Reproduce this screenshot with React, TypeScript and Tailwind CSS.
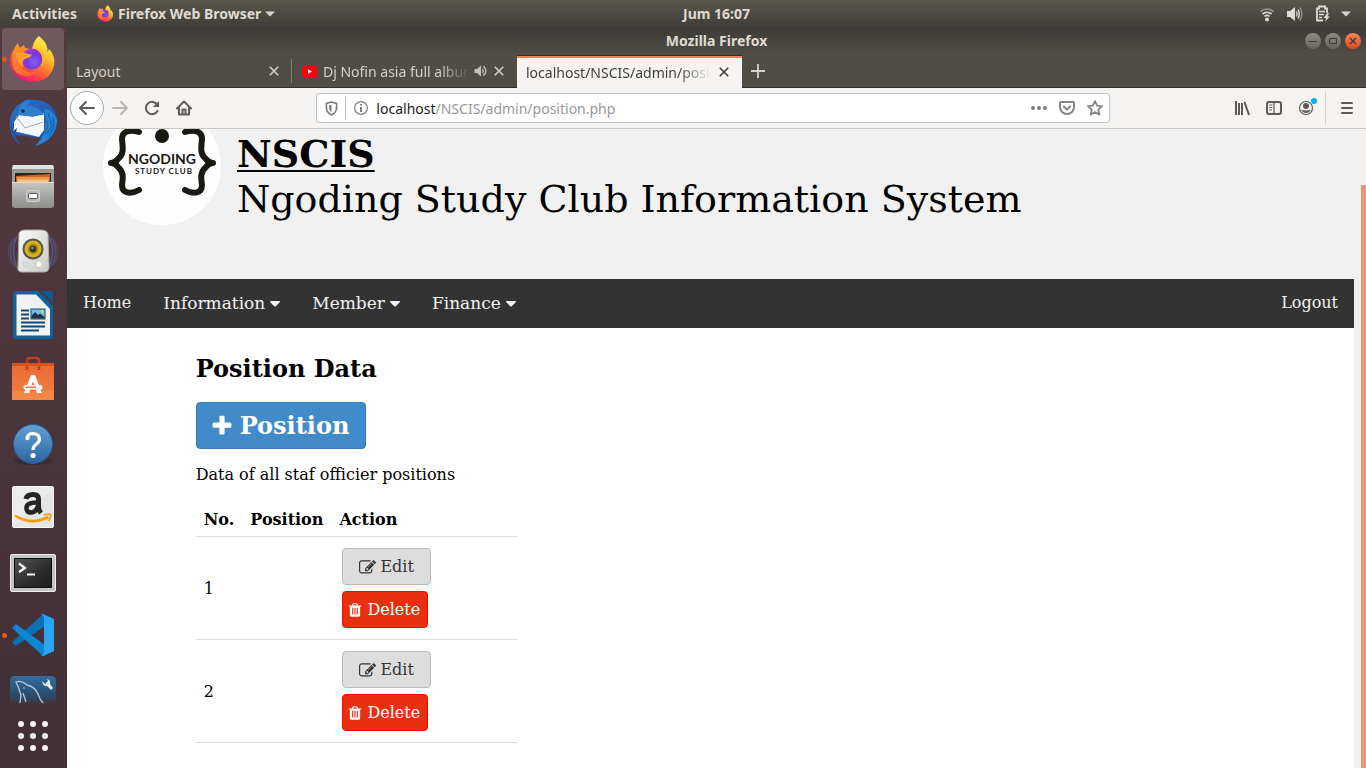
import React from 'react';

const serif = "font-['DejaVu_Serif',serif]";

/* ---------- Dock icons ---------- */

function FirefoxLogo({ className }: { className: string }) {
  return (
    <svg viewBox="9 8 48 48" className={className} aria-hidden="true">
      <defs>
        <linearGradient id="ffBody" x1="0.85" y1="0.1" x2="0.3" y2="1">
          <stop offset="0" stopColor="#fff24a" />
          <stop offset="0.3" stopColor="#ffc22a" />
          <stop offset="0.55" stopColor="#ff7a2c" />
          <stop offset="0.8" stopColor="#ff3a50" />
          <stop offset="1" stopColor="#e3127c" />
        </linearGradient>
        <radialGradient id="ffGlobe" cx="0.6" cy="0.65" r="0.65">
          <stop offset="0" stopColor="#7d63f5" />
          <stop offset="0.6" stopColor="#7a35dd" />
          <stop offset="1" stopColor="#a537dc" />
        </radialGradient>
        <linearGradient id="ffFox" x1="0" y1="0" x2="0.4" y2="1">
          <stop offset="0" stopColor="#ff9a1f" />
          <stop offset="1" stopColor="#ff6a32" />
        </linearGradient>
      </defs>
      <path d="M39 9C42 12 46 15 47 20C48 22 47 24 47.500 25L49 22C55 28 55.500 36 53 42C50 50 42 55 32 55C20 55 10 46 10 34C10 28 13 23 18 16C18 18 18.500 20 20 21L24 18C24 20 24.500 21 26 21.500L32 22C33 17 35 12 39 9Z" fill="url(#ffBody)" />
      <path d="M18 16C18 18 18.500 20 20 21L24 18C24 20 25 22 27 22C23 27 20 34 22 40C25 46 32 47 37 44C33 51 21 51 15 44C11 38 11 26 18 16Z" fill="url(#ffFox)" />
      <circle cx="32" cy="32" r="10.500" fill="url(#ffGlobe)" />
      <path d="M16 27C20 25 25 25 28 27L32 27.500C31 30 28 31 26 31.500C22 33 22 37 24 40C19 38 17 32 16 27Z" fill="#ffa02b" />
      <path d="M36 23C42 25 44 32 41 39C46 36 46 27 42 24Z" fill="#ffb52c" />
    </svg>
  );
}

function Thunderbird() {
  return (
    <svg viewBox="0 0 64 64" className="size-16" aria-hidden="true">
      <defs>
        <linearGradient id="tbBlue" x1="0" y1="0" x2="1" y2="1">
          <stop offset="0" stopColor="#2d74d2" />
          <stop offset="1" stopColor="#16479b" />
        </linearGradient>
      </defs>
      <path d="M20 12C24 8 28 8 30 9C44 7 54 16 56 27C58 40 49 51 36 54C39 51 40 49 41 47L14 44C14 47 18 51 20 54C13 50 8 41 9 32C9 24 13 16 20 12Z" fill="url(#tbBlue)" />
      <path d="M43 18C50 18 53 22 56 29C56 42 47 52 34 55C39 50 41 46 43 42C45 34 45 26 43 18Z" fill="#2583d2" />
      <path d="M47 22L51 35L46 43M52 26L53 36L48 46M43 24L47 34L44 42" stroke="#1a62b4" strokeWidth="1.300" fill="none" />
      <path d="M13 31L18 24L28 25C33 27 37 24 43 22L43 39L38 46L12 40L13 37Z" fill="#f4f6f8" />
      <path d="M15 25L24 37L42 31" stroke="#a4aab4" strokeWidth="1" fill="none" />
      <path d="M12 28L10 35L13 34L12 40L16 37L14 45C9 40 8 34 12 28Z" fill="#1c54a6" />
      <path d="M17 24C17 14 24 9 29 10L25 15C31 14 39 17 43 24C36 24 30 26 26 25Z" fill="#2f7fce" />
      <circle cx="22" cy="20" r="1.800" fill="#172f54" />
    </svg>
  );
}

function Files() {
  return (
    <svg viewBox="0 0 64 64" className="size-16" aria-hidden="true">
      <defs>
        <linearGradient id="fileBox" x1="0" y1="0" x2="0" y2="1">
          <stop offset="0" stopColor="#c5c5c3" />
          <stop offset="1" stopColor="#8d8d8b" />
        </linearGradient>
      </defs>
      <path d="M12 10H52L53 14V50H11V14Z" fill="#989896" />
      <path d="M12 10H52L53 14H11Z" fill="#e1e1df" />
      <rect x="14" y="18" width="36" height="10" fill="#262421" />
      <path d="M15 21L31 20L49 19V28H15Z" fill="#d66014" />
      <path d="M16 24H48V28H16Z" fill="#f0a252" />
      <path d="M16 23H48M17 26H47" stroke="#fff0cb" strokeWidth="0.800" />
      <path d="M11 27H53V50Q53 53 50 53H14Q11 53 11 50Z" fill="url(#fileBox)" />
      <path d="M11 27.500H53" stroke="#dededc" />
      <rect x="25.500" y="35.500" width="13" height="11" rx="1.500" fill="#b6b6b4" stroke="#d0d0cf" />
      <rect x="27.500" y="38.500" width="9" height="5" rx="1" fill="#f7f7f7" stroke="#555" />
    </svg>
  );
}

function Rhythmbox() {
  return (
    <svg viewBox="0 0 64 64" className="size-16" aria-hidden="true">
      <defs>
        <linearGradient id="rhBox" x1="0" y1="0" x2="1" y2="1">
          <stop offset="0" stopColor="#fbfbfa" />
          <stop offset="1" stopColor="#c7c7c4" />
        </linearGradient>
      </defs>
      <g fill="none" stroke="#5d6fae" strokeWidth="1.500">
        <path d="M13 19Q6 32 13 47M51 19Q58 32 51 47" opacity="0.450" />
        <path d="M16 17Q9 32 16 49M48 17Q55 32 48 49" opacity="0.600" />
        <path d="M10 22Q5 32 10 44M54 22Q59 32 54 44" opacity="0.250" />
      </g>
      <path d="M18 14Q19 11 25 11H39Q46 11 47 15L48 48Q48 53 43 53H21Q16 53 17 48Z" fill="url(#rhBox)" stroke="#acaca8" />
      <circle cx="32" cy="30" r="10.500" fill="#55534f" />
      <circle cx="32" cy="30" r="8.500" fill="#d5b01d" />
      <circle cx="32" cy="30" r="5" fill="#a3820a" />
      <circle cx="32" cy="30" r="3.200" fill="#343432" />
      <circle cx="31.500" cy="29" r="1.300" fill="#8b8b85" />
      <circle cx="38" cy="45" r="3.500" fill="#fff" stroke="#bfbfbc" />
      <rect x="22" y="43" width="4.500" height="4.500" rx="1" fill="none" stroke="#cdcdcb" />
    </svg>
  );
}

function Writer() {
  return (
    <svg viewBox="0 0 64 64" className="size-16" aria-hidden="true">
      <path d="M15 8H37L52 23V53Q52 56 49 56H15Q12 56 12 53V11Q12 8 15 8Z" fill="#0e639c" />
      <path d="M40 8H50Q52 8 52 10V20Z" fill="#0c5a91" />
      <path d="M15.500 11.500H35L49 26V52.500H15.500Z" fill="#f0f2f3" />
      <path d="M20 27.500H28M20 31.500H28M20 35.500H28M20 39.500H44M20 43.500H44M20 47.500H38" stroke="#0b4a78" strokeWidth="2" />
      <rect x="30" y="26" width="14" height="10" fill="#76bce6" stroke="#0b4a78" />
      <path d="M30.500 35.500V33L34 29L37 32L39 30.500L43.500 34V35.500Z" fill="#24323d" />
      <circle cx="41.500" cy="28.500" r="1.500" fill="#f2d64a" />
    </svg>
  );
}

function Software() {
  return (
    <svg viewBox="0 0 64 64" className="size-16" aria-hidden="true">
      <defs>
        <linearGradient id="swBag" x1="0" y1="0" x2="0" y2="1">
          <stop offset="0" stopColor="#eb6a35" />
          <stop offset="1" stopColor="#f2803f" />
        </linearGradient>
      </defs>
      <path d="M11 16H53V52Q53 53 51 53H13Q11 53 11 52Z" fill="url(#swBag)" />
      <path d="M11 44H53V53H11Z" fill="#f79254" opacity="0.500" />
      <path d="M26 23V14Q26 11 29 11H35Q38 11 38 14V23" fill="none" stroke="#bf3f16" strokeWidth="2.500" />
      <path d="M11 16H53V19H11Z" fill="#d8521f" />
      <path d="M30 28H34L41 46H36L32 34L28 46H23Z" fill="#fff" />
      <rect x="22.500" y="38" width="19" height="4.500" rx="2" fill="#fff" />
      <path d="M25 40.300H35" stroke="#ee7138" strokeWidth="1.500" />
    </svg>
  );
}

function Help() {
  return (
    <svg viewBox="0 0 64 64" className="size-16" aria-hidden="true">
      <defs>
        <linearGradient id="helpBlue" x1="0" y1="0" x2="0" y2="1">
          <stop offset="0" stopColor="#65a1d4" />
          <stop offset="1" stopColor="#2c659f" />
        </linearGradient>
      </defs>
      <ellipse cx="32" cy="50" rx="19" ry="4" fill="#2b1f24" opacity="0.400" />
      <circle cx="32" cy="33" r="19.500" fill="url(#helpBlue)" stroke="#255b92" />
      <path d="M26.500 26.500Q27 22.500 32 22.500Q38.500 23 38.500 28Q38.500 31 35 33.500Q32 35.500 32 39" fill="none" stroke="#fff" strokeWidth="3.200" />
      <circle cx="26.500" cy="27" r="2.200" fill="#fff" />
      <circle cx="32" cy="44.500" r="2.600" fill="#fff" />
    </svg>
  );
}

function Amazon() {
  return (
    <svg viewBox="0 0 64 64" className="size-16" aria-hidden="true">
      <rect x="11.500" y="11.500" width="41" height="41" rx="1.500" fill="#ececec" stroke="#fafafa" />
      <path d="M53 12V52H12Z" fill="#e1e1e1" opacity="0.600" />
      <path d="M25 24Q26 19.500 32 19.500Q37.500 19.500 37.500 24V32Q37.500 35 40 38" fill="none" stroke="#242424" strokeWidth="5" />
      <path d="M37 27.500Q25 27 25.500 33.500Q26 38 30.500 37.500Q36 36.500 37 31" fill="none" stroke="#242424" strokeWidth="4.600" />
      <path d="M14 40.500Q30 51 47 42" fill="none" stroke="#ff9900" strokeWidth="2.600" />
      <path d="M43 40Q48 38.500 50 39.500Q50 42 47.500 46" fill="none" stroke="#ff9900" strokeWidth="1.600" />
    </svg>
  );
}

function Terminal() {
  return (
    <svg viewBox="0 0 64 64" className="size-16" aria-hidden="true">
      <defs>
        <linearGradient id="termBg" x1="0" y1="0" x2="1" y2="1">
          <stop offset="0" stopColor="#535353" />
          <stop offset="0.600" stopColor="#2c2c2c" />
          <stop offset="1" stopColor="#1d1d1d" />
        </linearGradient>
      </defs>
      <rect x="9.500" y="15.500" width="45" height="37" rx="1.500" fill="#c3c3c1" stroke="#efefed" />
      <rect x="13.500" y="19.500" width="37" height="29" fill="url(#termBg)" stroke="#111" />
      <path d="M18 24.500L24 29L18 33" fill="none" stroke="#fff" strokeWidth="2.200" />
      <path d="M26 35.500H34" stroke="#fff" strokeWidth="2" />
    </svg>
  );
}

function VsCode() {
  return (
    <svg viewBox="0 0 64 64" className="size-16" aria-hidden="true">
      <path d="M11 39L15 43L44 23V12Q42 11 40 13L11 39Z" fill="#0870b5" />
      <path d="M11 25L15 21L44 42V53Q42 53 40 51Z" fill="#0a86d3" />
      <path d="M40 12L42 11L53 16V48L42 53L40 52Q43 51 43 48V15Q43 12 40 12Z" fill="#2aa5f3" />
    </svg>
  );
}

function MySql() {
  return (
    <svg viewBox="0 0 64 64" className="size-16" aria-hidden="true">
      <defs>
        <linearGradient id="sqlBg" x1="0" y1="0" x2="0" y2="1">
          <stop offset="0" stopColor="#336e9f" />
          <stop offset="0.700" stopColor="#284b6c" />
          <stop offset="1" stopColor="#46323a" />
        </linearGradient>
      </defs>
      <path d="M9 14Q9 9 14 9H50Q55 9 55 14V37H9Z" fill="url(#sqlBg)" />
      <path d="M19 36L20 28Q18 21 15 15Q20 13 26 18Q34 20 37 27Q39 33 42 36M22 26L25 35" fill="none" stroke="#b9c6d3" strokeWidth="1.300" />
      <circle cx="23" cy="21" r="0.800" fill="#b9c6d3" />
      <path d="M41 14L44 17L47 14L46 12Q50 13 49 17L52 21L50 23L46 19Q42 20 41 14Z" fill="#e3e8ec" />
    </svg>
  );
}

const dockApps = [
  { name: 'Firefox', icon: <FirefoxLogo className="size-12" />, running: true, active: true },
  { name: 'Thunderbird', icon: <Thunderbird /> },
  { name: 'Files', icon: <Files /> },
  { name: 'Rhythmbox', icon: <Rhythmbox /> },
  { name: 'LibreOffice Writer', icon: <Writer /> },
  { name: 'Ubuntu Software', icon: <Software /> },
  { name: 'Help', icon: <Help /> },
  { name: 'Amazon', icon: <Amazon /> },
  { name: 'Terminal', icon: <Terminal /> },
  { name: 'Visual Studio Code', icon: <VsCode />, running: true },
  { name: 'MySQL Workbench', icon: <MySql /> },
];

function Dock() {
  return (
    <aside className="flex w-[67px] shrink-0 flex-col bg-linear-to-b from-[#533a3f] to-[#413036]">
      <ul className="min-h-0 flex-1 overflow-hidden">
        {dockApps.map((app) => (
          <li key={app.name} className="h-16">
            <button aria-label={app.name} className="relative flex h-16 w-full items-center justify-center pr-px">
              {app.active && <span className="absolute inset-x-0 top-px mr-[3px] ml-0.5 h-[62px] rounded-[4px] bg-[#6f595e]" />}
              {app.running && <span className="absolute top-[30px] left-0.5 size-[5px] rounded-full bg-[#e95420]" />}
              <span className="relative">{app.icon}</span>
            </button>
          </li>
        ))}
      </ul>
      <button aria-label="Show Applications" className="flex h-16 shrink-0 items-center justify-center pr-px">
        <svg viewBox="0 0 64 64" className="size-16" fill="#f2f1f0" aria-hidden="true">
          {[20, 32, 44].map((y) => [20, 32, 44].map((x) => <circle key={`${x}-${y}`} cx={x} cy={y} r="3" />))}
        </svg>
      </button>
    </aside>
  );
}

/* ---------- Desktop top bar ---------- */

function Triangle() {
  return (
    <svg viewBox="0 0 10 6" className="h-[6px] w-[10px]" fill="#d6d3cd" aria-hidden="true">
      <path d="M0 0.500H10L5 5.500Z" />
    </svg>
  );
}

function TopBar() {
  return (
    <header className="grid h-[27px] shrink-0 grid-cols-[1fr_auto_1fr] items-center bg-linear-to-b from-[#5a574d] to-[#3f3e38] text-[14px] font-bold text-[#dfdbd2]">
      <div className="flex items-center gap-5 pl-3">
        <button>Activities</button>
        <button className="flex items-center gap-1">
          <FirefoxLogo className="size-[17px]" />
          <span>Firefox Web Browser</span>
          <Triangle />
        </button>
      </div>
      <button className="ml-[67px]">Jum 16:07</button>
      <button aria-label="System menu" className="flex items-center gap-[10px] justify-self-end pr-[15px]">
        <svg viewBox="0 0 16 16" className="mr-0.5 size-4" fill="none" stroke="#dfdbd2" aria-hidden="true">
          <path d="M1.500 5.500Q8 0.500 14.500 5.500" strokeWidth="1.700" opacity="0.500" />
          <path d="M3.500 8Q8 4.500 12.500 8" strokeWidth="1.700" />
          <path d="M5.500 10.300Q8 8.500 10.500 10.300" strokeWidth="1.600" />
          <circle cx="8" cy="13.500" r="2" fill="#dfdbd2" stroke="none" />
        </svg>
        <svg viewBox="0 0 16 16" className="size-4" fill="none" stroke="#dfdbd2" aria-hidden="true">
          <path d="M0 5H3L8 1V15L3 11H0Z" fill="#dfdbd2" stroke="none" />
          <path d="M9.500 5.500Q11 8 9.500 10.500M11 3.500Q13.500 8 11 12.500" strokeWidth="1.400" />
          <path d="M13 1.500Q16.500 8 13 14.500" strokeWidth="1.500" opacity="0.500" />
        </svg>
        <svg viewBox="0 0 16 17" className="ml-0.5 h-[17px] w-4" fill="none" stroke="#dfdbd2" strokeWidth="1.800" aria-hidden="true">
          <path d="M8 15.500H2V3.500H4V1.500H10V3.500H12V8" />
          <path d="M4 6.500H10M4 9.500H9M4 12.500H7" strokeWidth="1.400" />
          <path d="M12.500 8L8.500 13H11L10 16.500L15 11.500H12.500L14 8Z" fill="#dfdbd2" stroke="none" />
        </svg>
        <Triangle />
      </button>
    </header>
  );
}

/* ---------- Browser window chrome ---------- */

function CloseIcon() {
  return (
    <svg viewBox="0 0 10 10" className="size-[10px]" stroke="currentColor" strokeWidth="1.600" aria-hidden="true">
      <path d="M0.800 0.800L9.200 9.200M9.200 0.800L0.800 9.200" />
    </svg>
  );
}

function TitleBar() {
  return (
    <div className="grid h-7 shrink-0 grid-cols-[1fr_auto_1fr] items-center bg-linear-to-b from-[#3c3b37] to-[#504d46]">
      <h1 className="col-start-2 pb-0.5 text-[14px] font-bold text-[#dfdbd2]">Mozilla Firefox</h1>
      <div className="flex gap-1 justify-self-end pr-[5px] text-[#3c3b37]">
        <button aria-label="Minimize" className="flex size-4 items-center justify-center rounded-full bg-linear-to-b from-[#8d8b84] to-[#65635d]">
          <svg viewBox="0 0 8 8" className="size-2" stroke="currentColor" aria-hidden="true"><path d="M0 4.500H8" /></svg>
        </button>
        <button aria-label="Maximize" className="flex size-4 items-center justify-center rounded-full bg-linear-to-b from-[#8d8b84] to-[#65635d]">
          <svg viewBox="0 0 8 8" className="size-2" stroke="currentColor" fill="none" aria-hidden="true"><path d="M0.500 1.500H7.500V6.500H0.500Z" /></svg>
        </button>
        <button aria-label="Close" className="flex size-4 items-center justify-center rounded-full bg-linear-to-b from-[#f68457] to-[#dd4814]">
          <svg viewBox="0 0 8 8" className="size-2" stroke="currentColor" strokeWidth="1.400" aria-hidden="true"><path d="M1 1L7 7M7 1L1 7" /></svg>
        </button>
      </div>
    </div>
  );
}

const fade = '[mask-image:linear-gradient(to_right,black_calc(100%-32px),transparent)]';

function TabBar() {
  return (
    <div role="tablist" className="flex h-[33px] shrink-0 border-b border-[#33322e] bg-[#504d46] text-[14px] text-[#d5d1c8]">
      <div role="tab" className="flex w-[225px] items-center pl-[9px]">
        <span className="flex-1">Layout</span>
        <button aria-label="Close tab"><CloseIcon /></button>
        <span className="ml-3 h-6 w-px bg-[#7c7a73]" />
      </div>
      <div role="tab" className="flex w-[225px] items-center pr-[13px] pl-[10px]">
        <svg viewBox="0 0 15 11" className="mr-1.5 h-[11px] w-[15px] shrink-0" aria-hidden="true">
          <rect width="15" height="11" rx="2.500" fill="#f00" />
          <path d="M6 3.200L10 5.500L6 7.800Z" fill="#fff" />
        </svg>
        <span className={`min-w-0 flex-1 overflow-hidden whitespace-nowrap ${fade}`}>Dj Nofin asia full album</span>
        <button aria-label="Mute tab" className="mr-1.5 ml-1">
          <svg viewBox="0 0 14 12" className="h-3 w-[14px]" fill="none" stroke="#c4c1b9" strokeWidth="1.300" aria-hidden="true">
            <path d="M0.500 4H3L7 0.500V11.500L3 8H0.500Z" fill="#c4c1b9" stroke="none" />
            <path d="M8.500 4Q10 6 8.500 8M9 1.500Q11.800 2.500 11.800 6T9 10.500" />
          </svg>
        </button>
        <button aria-label="Close tab"><CloseIcon /></button>
      </div>
      <div role="tab" aria-selected="true" className="mt-px -mb-px flex w-[225px] items-center border-t-2 border-[#f0825a] bg-[#f5f4f2] pr-[13px] pb-0.5 pl-[9px] text-[#3f3e3b] shadow-[0_-1px_0_#33322e]">
        <span className={`mr-2 min-w-0 flex-1 overflow-hidden whitespace-nowrap ${fade}`}>localhost/NSCIS/admin/position.php</span>
        <button aria-label="Close tab"><CloseIcon /></button>
      </div>
      <button aria-label="New tab" className="px-[9px]">
        <svg viewBox="0 0 14 14" className="size-[14px]" stroke="currentColor" strokeWidth="1.800" aria-hidden="true"><path d="M7 0V14M0 7H14" /></svg>
      </button>
    </div>
  );
}

function ToolButton({ label, className = 'text-[#5c5b58]', children }: { label: string; className?: string; children: React.ReactNode }) {
  return (
    <button aria-label={label} className={`flex h-8 w-8 shrink-0 items-center justify-center ${className}`}>
      <svg viewBox="0 0 16 16" className="size-4 overflow-visible" fill="none" stroke="currentColor" strokeWidth="2" strokeLinecap="round" strokeLinejoin="round" aria-hidden="true">
        {children}
      </svg>
    </button>
  );
}

function Toolbar() {
  return (
    <div className="flex h-[41px] shrink-0 items-center border-b border-[#c9c7c4] bg-[#f5f4f2] pr-[3px] pl-[3px]">
      <button aria-label="Back" className="flex size-[34px] shrink-0 items-center justify-center rounded-full border border-[#a9a8a5] bg-white text-[#5c5b58]">
        <svg viewBox="0 0 16 16" className="size-4" fill="none" stroke="currentColor" strokeWidth="2" strokeLinecap="round" strokeLinejoin="round" aria-hidden="true">
          <path d="M15 8H1.500M7 2L1 8L7 14" />
        </svg>
      </button>
      <ToolButton label="Forward" className="text-[#b8b7b4]"><path d="M1 8H14.500M9 2L15 8L9 14" /></ToolButton>
      <ToolButton label="Reload">
        <path d="M13.500 11A6.200 6.200 0 1 1 13.500 5" />
        <path d="M15 1V7H9Z" fill="currentColor" stroke="none" />
      </ToolButton>
      <ToolButton label="Home">
        <path d="M1 8.500L8 1.500L15 8.500M3 8V14.500H13V8" />
        <path d="M6.500 14V9.500H9.500V14" />
      </ToolButton>
      <span className="w-[9%] shrink-0" />
      <div className="flex h-[30px] min-w-0 flex-1 items-center rounded-[3px] border border-[#c3c1be] bg-white text-[14px]">
        <button aria-label="Tracking protection" className="flex h-full w-[28px] items-center justify-center">
          <svg viewBox="0 0 14 16" className="h-[15px] w-[13px]" fill="none" stroke="#7d7c79" aria-hidden="true">
            <path d="M1.500 2.500Q4.500 2 7 1Q9.500 2 12.500 2.500V7Q12.500 12.500 7 15Q1.500 12.500 1.500 7Z" strokeWidth="1.800" />
            <path d="M7 4V12Q4.300 10 4.300 7V4.500Z" fill="#7d7c79" stroke="none" />
          </svg>
        </button>
        <span className="h-[22px] w-px bg-[#c3c1be]" />
        <button aria-label="Site information" className="flex h-full w-[30px] items-center justify-center">
          <svg viewBox="0 0 14 14" className="size-[14px]" fill="none" stroke="#7d7c79" aria-hidden="true">
            <circle cx="7" cy="7" r="6.400" strokeWidth="1.200" />
            <path d="M7 3V4.500M7 6V11" strokeWidth="2" />
          </svg>
        </button>
        <label htmlFor="url" className="text-[#1c1c1c]">localhost</label>
        <input id="url" defaultValue="/NSCIS/admin/position.php" className="h-7 min-w-0 flex-1 bg-transparent text-[#98979b] outline-none" />
        <button aria-label="Page actions" className="flex w-7 justify-center">
          <svg viewBox="0 0 16 4" className="h-1 w-4" fill="#7d7c79" aria-hidden="true"><circle cx="2" cy="2" r="2" /><circle cx="8" cy="2" r="2" /><circle cx="14" cy="2" r="2" /></svg>
        </button>
        <button aria-label="Save to Pocket" className="flex w-7 justify-center">
          <svg viewBox="0 0 16 14" className="h-[14px] w-4" fill="none" stroke="#858481" strokeWidth="2" strokeLinecap="round" strokeLinejoin="round" aria-hidden="true">
            <path d="M2 1H14Q15 1 15 2V6A7 7 0 0 1 1 6V2Q1 1 2 1Z" /><path d="M4.800 5.500L8 8.500L11.200 5.500" />
          </svg>
        </button>
        <button aria-label="Bookmark this page" className="flex w-7 justify-center">
          <svg viewBox="0 0 16 16" className="size-4" fill="none" stroke="#858481" strokeWidth="1.800" strokeLinejoin="round" aria-hidden="true">
            <path d="M8 1L10.100 5.700L15 6.200L11.300 9.600L12.400 14.700L8 12.100L3.600 14.700L4.700 9.600L1 6.200L5.900 5.700Z" />
          </svg>
        </button>
      </div>
      <span className="w-[9%] shrink-0" />
      <ToolButton label="Library"><path d="M2 1V15M5 3V15M8 3V15M10.500 2L15 15" strokeLinecap="butt" /></ToolButton>
      <ToolButton label="Sidebars">
        <rect x="1" y="2" width="14" height="12" rx="2" />
        <path d="M8 2V14" strokeWidth="1.200" /><path d="M3.500 5H6M3.500 7.500H6M3.500 10H5.500" strokeWidth="1" />
      </ToolButton>
      <ToolButton label="Account">
        <circle cx="8" cy="8" r="6.500" strokeWidth="1.200" />
        <circle cx="8" cy="6" r="3" fill="currentColor" stroke="none" />
        <path d="M3.500 9.500Q8 11.500 12.500 9.500Q11.500 13 8 13T3.500 9.500Z" fill="currentColor" stroke="none" />
        <circle cx="16" cy="1" r="3" fill="#00b3f4" stroke="none" />
      </ToolButton>
      <span className="mr-[5px] ml-[3px] h-[34px] w-px bg-[#d6d5d2]" />
      <ToolButton label="Menu"><path d="M3 3H13M3 8H13M3 13H13" /></ToolButton>
    </div>
  );
}

/* ---------- Web page ---------- */

function Brace({ flip = false }: { flip?: boolean }) {
  return (
    <path
      transform={flip ? 'translate(118 0) scale(-1 1)' : undefined}
      d="M36 25C27 22 19 24 19 32C20 42 21 47 15 52C13 55 11 56 8 56C11 56 13 57 15 60C21 65 20 71 19 78C19 86 27 88 36 83"
      fill="none"
      stroke="#1b1913"
      strokeWidth="6"
      strokeLinecap="round"
      strokeLinejoin="round"
    />
  );
}

function ClubLogo() {
  return (
    <svg viewBox="0 0 118 118" className="size-[118px]" role="img" aria-label="Ngoding Study Club">
      <circle cx="59" cy="59" r="59" fill="#fefefe" />
      <circle cx="59" cy="29" r="7" fill="#1b1913" />
      <Brace />
      <Brace flip />
      <text x="59" y="57" textAnchor="middle" className="font-['Lato',sans-serif] text-[14px] font-bold" fill="#1b1913">NGODING</text>
      <text x="61" y="67" textAnchor="middle" className="font-['Lato',sans-serif] text-[8px] font-bold tracking-[1px]" fill="#1b1913">STUDY CLUB</text>
    </svg>
  );
}

function Glyph({ d, className }: { d: string; className: string }) {
  return (
    <svg viewBox="0 0 1792 1792" className={className} fill="currentColor" aria-hidden="true"><path d={d} /></svg>
  );
}

const plusPath = 'M1600 736v192q0 40-28 68t-68 28h-416v416q0 40-28 68t-68 28h-192q-40 0-68-28t-28-68v-416h-416q-40 0-68-28t-28-68v-192q0-40 28-68t68-28h416v-416q0-40 28-68t68-28h192q40 0 68 28t28 68v416h416q40 0 68 28t28 68z';
const editPath = 'M888 1184l116-116-152-152-116 116v56h96v96h56zm440-720q-16-16-33 1l-350 350q-17 17-1 33t33-1l350-350q17-17 1-33zm80 594v190q0 119-84.500 203.500t-203.500 84.500h-832q-119 0-203.500-84.500t-84.500-203.500v-832q0-119 84.500-203.500t203.500-84.500h832q63 0 117 25 15 7 18 23 3 17-9 29l-49 49q-14 14-32 8-23-6-45-6h-832q-66 0-113 47t-47 113v832q0 66 47 113t113 47h832q66 0 113-47t47-113v-126q0-13 9-22l64-64q15-15 35-7t20 29zm-96-738l288 288-672 672h-288v-288zm444 132l-92 92-288-288 92-92q28-28 68-28t68 28l152 152q28 28 28 68t-28 68z';
const trashPath = 'M704 1376v-704q0-14-9-23t-23-9h-64q-14 0-23 9t-9 23v704q0 14 9 23t23 9h64q14 0 23-9t9-23zm256 0v-704q0-14-9-23t-23-9h-64q-14 0-23 9t-9 23v704q0 14 9 23t23 9h64q14 0 23-9t9-23zm256 0v-704q0-14-9-23t-23-9h-64q-14 0-23 9t-9 23v704q0 14 9 23t23 9h64q14 0 23-9t9-23zm-544-992h448l-48-117q-7-9-17-11h-317q-10 2-17 11zm928 32v64q0 14-9 23t-23 9h-96v948q0 83-47 143.500t-113 60.500h-832q-66 0-113-58.500t-47-141.500v-952h-96q-14 0-23-9t-9-23v-64q0-14 9-23t23-9h309l70-167q15-37 54-63t79-26h320q40 0 79 26t54 63l70 167h309q14 0 23 9t9 23z';

function NavMenu({ children }: { children: string }) {
  return (
    <button className="flex items-center gap-[5px] px-4 pt-px text-[17px]">
      {children}
      <svg viewBox="0 0 10 6" className="mb-px h-[6px] w-[10px]" fill="currentColor" aria-hidden="true"><path d="M0.500 0H9.500L10 1L5.500 5.600H4.500L0 1Z" /></svg>
    </button>
  );
}

function Page() {
  return (
    <div className={`min-w-0 flex-1 overflow-hidden bg-white text-base text-black ${serif}`}>
      <header className="flex h-[150px] bg-[#f1f1f1] pl-9">
        <div className="-mt-[22px]"><ClubLogo /></div>
        <div className="pt-0.5 pl-4 text-[38px] leading-[45px] whitespace-nowrap">
          <p><b className="underline decoration-2 underline-offset-[3px]">NSCIS</b></p>
          <p>Ngoding Study Club Information System</p>
        </div>
      </header>
      <nav className="flex h-[49px] bg-[#333] text-[#f2f2f2]">
        <a href="#home" className="px-4 py-3.5 leading-[19px]">Home</a>
        <NavMenu>Information</NavMenu>
        <NavMenu>Member</NavMenu>
        <NavMenu>Finance</NavMenu>
        <a href="#logout" className="ml-auto px-4 py-3.5 leading-[19px]">Logout</a>
      </nav>
      <main className="px-[10%] pt-[27px]">
        <h2 className="mb-[19px] text-2xl leading-7 font-bold">Position Data</h2>
        <button className="flex h-[47px] items-center gap-1.5 rounded-[4px] border border-[#357ebd] bg-[#428bca] px-4 text-2xl leading-7 font-bold text-white">
          <Glyph d={plusPath} className="-ml-[3px] size-6" />
          Position
        </button>
        <p className="my-4 leading-[19px]">Data of all staf officier positions</p>
        <table className="w-[321px] border-collapse text-left leading-5">
          <thead>
            <tr className="h-9 border-b border-[#ddd]">
              <th className="w-[46px] px-2 pt-1">No.</th>
              <th className="w-[89px] px-2 pt-1">Position</th>
              <th className="px-2 pt-1">Action</th>
            </tr>
          </thead>
          <tbody>
            {[1, 2].map((n) => (
              <tr key={n} className="h-[103px] border-b border-[#ddd]">
                <td className="px-2 pt-0.5">{n}</td>
                <td className="px-2" />
                <td className="px-[11px]">
                  <div className="flex flex-col items-start gap-1.5">
                    <button className="flex h-[37px] items-center gap-1 rounded-[4px] border border-[#bbb] bg-[#ddd] px-4 pt-0.5 text-[#333]">
                      <Glyph d={editPath} className="size-[17px]" />
                      Edit
                    </button>
                    <button className="flex h-[37px] items-center gap-1 rounded-[4px] border border-[#f00] bg-[#e83011] pt-0.5 pr-[7px] pl-1.5 text-white">
                      <Glyph d={trashPath} className="-ml-0.5 size-4" />
                      Delete
                    </button>
                  </div>
                </td>
              </tr>
            ))}
          </tbody>
        </table>
      </main>
    </div>
  );
}

export default function App() {
  return (
    <div className="flex h-screen flex-col overflow-hidden font-['Noto_Sans',sans-serif]">
      <TopBar />
      <div className="flex min-h-0 flex-1">
        <Dock />
        <section className="flex min-w-0 flex-1 flex-col">
          <TitleBar />
          <TabBar />
          <Toolbar />
          <div className="flex min-h-0 flex-1">
            <Page />
            <div className="flex w-3 shrink-0 flex-col items-end bg-[#f2f1f0] pt-14">
              <div className="w-[5px] flex-1 bg-[#f19272]" />
            </div>
          </div>
        </section>
      </div>
    </div>
  );
}
